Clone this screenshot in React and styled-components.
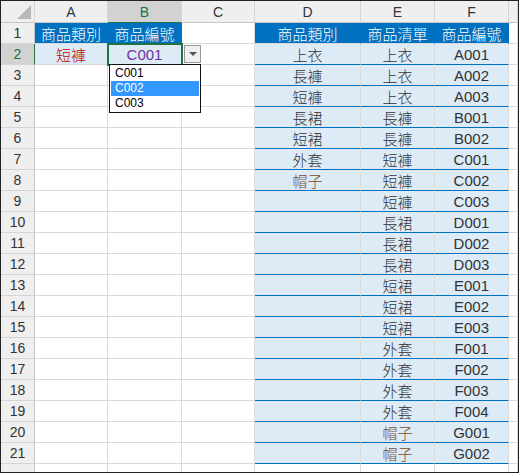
import React from "react";
import styled, { createGlobalStyle } from "styled-components";

const Global = createGlobalStyle`
  body { margin: 0; background: #fff; font-family: "Liberation Sans", "Noto Sans CJK TC", sans-serif; }
`;

const Frame = styled.div`
  position: relative;
  width: 517px;
  height: 471px;
  border: 1px solid #222;
  overflow: hidden;
`;

const Grid = styled.div`
  display: grid;
  grid-template-columns: 34px 73px 74px 73px 106px 74px 74px 9px;
  grid-template-rows: 22px repeat(22, 21px);
`;

const Head = styled.div`
  background: ${(p) => (p.$active ? "#d2d2d2" : "#efefef")};
  color: ${(p) => (p.$active ? "#217346" : "#333")};
  border-right: 1px solid #d4d4d4;
  border-bottom: 1px solid ${(p) => (p.$active ? "#217346" : "#c6c6c6")};
  display: flex;
  align-items: center;
  justify-content: center;
  font-size: 14px;
  box-sizing: border-box;
`;

const RowNum = styled(Head)`
  border-bottom: 1px solid #d4d4d4;
  border-right: 1px solid ${(p) => (p.$active ? "#217346" : "#c6c6c6")};
  font-size: 14px;
`;

const Corner = styled(Head)`
  position: relative;
  &::after {
    content: "";
    position: absolute;
    right: 3px;
    bottom: 3px;
    border-left: 14px solid transparent;
    border-bottom: 14px solid #b8b8b8;
  }
`;

const Cell = styled.div`
  box-sizing: border-box;
  border-right: 1px solid ${(p) => (p.$tone === "blue" ? "#0070c0" : "#dadada")};
  border-bottom: 1px solid ${(p) => (p.$line ? "#0070c0" : "#dadada")};
  background: ${(p) =>
    p.$tone === "blue" ? "#0070c0" : p.$tone === "light" ? "#ddebf7" : "#fff"};
  color: ${(p) => p.$color || (p.$tone === "blue" ? "#fff" : "#333")};
  font-family: ${(p) => (p.$latin ? '"Liberation Sans", sans-serif' : '"Noto Sans CJK TC", "Liberation Sans", sans-serif')};
  font-size: 15px;
  font-weight: ${(p) => (p.$latin ? 400 : 300)};
  display: flex;
  align-items: center;
  justify-content: center;
  white-space: nowrap;
  ${(p) => p.$sel && "outline: 2px solid #217346; outline-offset: -1px; z-index: 1;"}
`;

const DropBtn = styled.div`
  position: absolute;
  left: 183px;
  top: 44px;
  width: 15px;
  height: 16px;
  border: 1px solid #999;
  background: #f0f0f0;
  display: flex;
  align-items: center;
  justify-content: center;
  &::after {
    content: "";
    border-left: 4px solid transparent;
    border-right: 4px solid transparent;
    border-top: 4px solid #555;
  }
`;

const List = styled.div`
  position: absolute;
  left: 108px;
  top: 63px;
  width: 90px;
  border: 1px solid #111;
  background: #fff;
  font-size: 12px;
  padding: 1px 0;
  z-index: 2;
`;

const Option = styled.div`
  height: 15px;
  line-height: 15px;
  padding-left: 4px;
  margin: 0 1px;
  background: ${(p) => (p.$hi ? "#3399ff" : "transparent")};
  color: ${(p) => (p.$hi ? "#fff" : "#000")};
`;

const cols = ["A", "B", "C", "D", "E", "F"];
const d = ["上衣", "長褲", "短褲", "長裙", "短裙", "外套", "帽子"];
const e = ["上衣","上衣","上衣","長褲","長褲","短褲","短褲","短褲","長裙","長裙","長裙","短裙","短裙","短裙","外套","外套","外套","外套","帽子","帽子"];
const f = ["A001","A002","A003","B001","B002","C001","C002","C003","D001","D002","D003","E001","E002","E003","F001","F002","F003","F004","G001","G002"];

export default function App() {
  const cells = [];
  cells.push(<Corner key="c" />);
  cols.forEach((c) => cells.push(<Head key={c} $active={c === "B"}>{c}</Head>));
  cells.push(<Head key="x" />);
  for (let r = 1; r <= 22; r++) {
    cells.push(<RowNum key={"r" + r} $active={r === 2}>{r < 22 ? r : ""}</RowNum>);
    const i = r - 2;
    if (r === 1) {
      cells.push(<Cell key="a1" $tone="blue">商品類別</Cell>);
      cells.push(<Cell key="b1" $tone="blue">商品編號</Cell>);
      cells.push(<Cell key="c1" />);
      cells.push(<Cell key="d1" $tone="blue">商品類別</Cell>);
      cells.push(<Cell key="e1" $tone="blue">商品清單</Cell>);
      cells.push(<Cell key="f1" $tone="blue">商品編號</Cell>);
    } else {
      if (r === 2) {
        cells.push(<Cell key="a2" $tone="light" $color="#c00000">短褲</Cell>);
        cells.push(<Cell key="b2" $tone="light" $color="#7030a0" $sel $latin>C001</Cell>);
      } else {
        cells.push(<Cell key={"a" + r} />, <Cell key={"b" + r} />);
      }
      cells.push(<Cell key={"c" + r} />);
      if (i < 20) {
        const hat = (v) => (v === "帽子" ? "#7a4a28" : undefined);
        cells.push(<Cell key={"d" + r} $tone="light" $line $color={hat(d[i])}>{d[i] || ""}</Cell>);
        cells.push(<Cell key={"e" + r} $tone="light" $line $color={hat(e[i])}>{e[i]}</Cell>);
        cells.push(<Cell key={"f" + r} $tone="light" $line $latin>{f[i]}</Cell>);
      } else {
        cells.push(<Cell key={"d" + r} />, <Cell key={"e" + r} />, <Cell key={"f" + r} />);
      }
    }
    cells.push(<Cell key={"g" + r} />);
  }
  return (
    <>
      <Global />
      <Frame>
        <Grid>{cells}</Grid>
        <DropBtn />
        <List>
          <Option>C001</Option>
          <Option $hi>C002</Option>
          <Option>C003</Option>
        </List>
      </Frame>
    </>
  );
}
